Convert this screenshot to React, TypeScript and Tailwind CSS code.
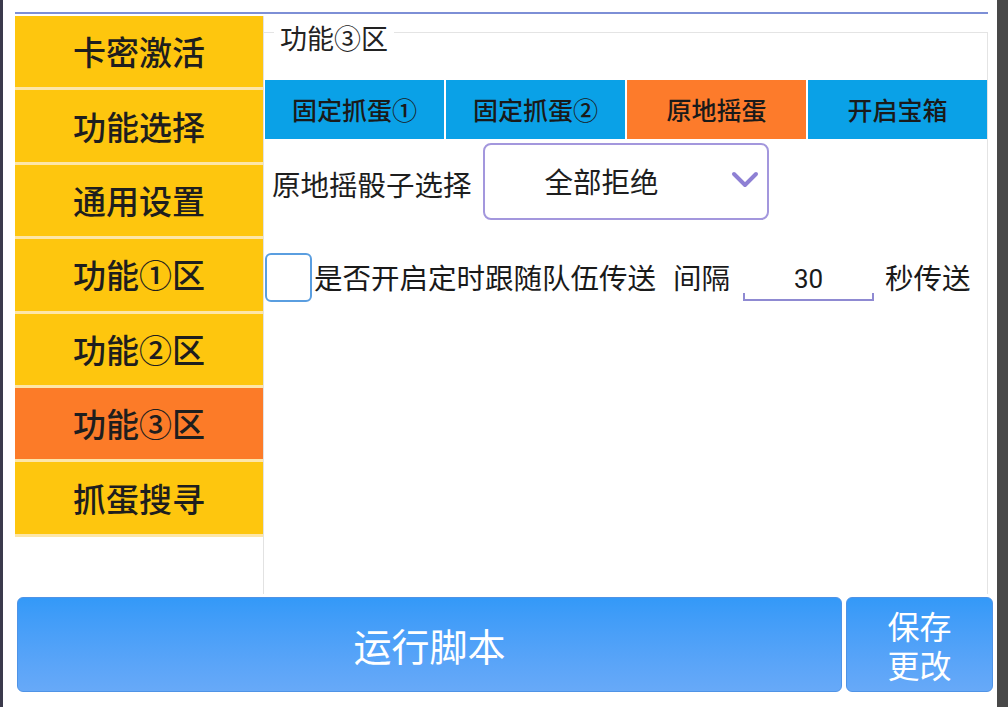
import React from "react";

const font = { fontFamily: '"Noto Sans CJK SC", "Noto Sans", sans-serif' };

const side = ["卡密激活", "功能选择", "通用设置", "功能①区", "功能②区", "功能③区", "抓蛋搜寻"];
const tabs = ["固定抓蛋①", "固定抓蛋②", "原地摇蛋", "开启宝箱"];

export default function App() {
  return (
    <div className="w-[1008px] h-[707px] flex bg-[#3a3a40] overflow-hidden" style={font}>
      <div className="w-[3px] h-full bg-[#3b3a4c]" />
      <div className="w-[994px] h-full bg-white flex flex-col pl-[12px] pr-[4px]">
        <div className="mt-[12px] h-[2px] w-[973px] bg-[#7d8fd6]" />
        <div className="mt-[2px] h-[578px] flex">
          {/* sidebar */}
          <div className="w-[249px] h-full border-r border-[#e2e2e2] flex flex-col">
            {side.map((s, i) => (
              <div
                key={s}
                className={
                  "h-[74.4px] shrink-0 border-b-[3px] border-[#fde6a8] flex items-center justify-center text-[33px] font-medium text-[#1e1e1e] leading-none " +
                  (i === 5 ? "bg-[#fc7b28]" : "bg-[#fec60e]")
                }
              >
                {s}
              </div>
            ))}
          </div>
          {/* content */}
          <div className="w-[724px] h-full flex flex-col">
            <div className="mt-[16px] flex-1 border-t border-r border-[#e4e4e4] relative flex flex-col">
              <div className="absolute left-[10px] top-[-10px] bg-white px-[6px] text-[27px] leading-[30px] text-[#222]">
                功能③区
              </div>
              <div className="mt-[47px] ml-[1px] grid grid-cols-4 gap-[2px] h-[59px]">
                {tabs.map((t, i) => (
                  <div
                    key={t}
                    className={
                      "flex items-center justify-center text-[25px] font-medium text-[#1a1a1a] leading-none " +
                      (i === 2 ? "bg-[#fd7b2b]" : "bg-[#0aa1e7]")
                    }
                  >
                    {t}
                  </div>
                ))}
              </div>
              <div className="mt-[4px] h-[77px] flex items-center pl-[8px]">
                <span className="text-[28.5px] text-[#1e1e1e] leading-none mt-[6px]">原地摇骰子选择</span>
                <div className="ml-[11px] w-[286px] h-[77px] border-2 border-[#a397dd] rounded-[8px] flex items-center pl-[60px] pr-[8px]">
                  <span className="text-[28.5px] text-[#1e1e1e] leading-none flex-1">全部拒绝</span>
                  <svg width="28" height="18" viewBox="0 0 28 18" className="mb-[4px]">
                    <polyline points="3,3 14,14 25,3" fill="none" stroke="#8e80d4" strokeWidth="4" strokeLinecap="round" strokeLinejoin="round" />
                  </svg>
                </div>
              </div>
              <div className="mt-[33px] flex items-center pl-[1px]">
                <div className="w-[47px] h-[49px] border-2 border-[#5a9ee0] rounded-[6px]" />
                <span className="ml-[2px] text-[28.5px] text-[#1a1a1a] leading-none">是否开启定时跟随队伍传送</span>
                <span className="ml-[17px] text-[28.5px] text-[#1a1a1a] leading-none">间隔</span>
                <div className="ml-[13px] w-[131px] flex flex-col items-center mt-[12px]">
                  <span className="text-[26px] text-[#1a1a1a] leading-none" style={{ fontFamily: 'Roboto, "Noto Sans", sans-serif' }}>30</span>
                  <div className="mt-[1px] w-full h-[8px] border-b-2 border-x-2 border-[#8f8ad2]" />
                </div>
                <span className="ml-[11px] text-[28.5px] text-[#1a1a1a] leading-none">秒传送</span>
              </div>
            </div>
          </div>
        </div>
        <div className="mt-[3px] h-[95px] flex gap-[4px] pl-[2px]">
          <div className="w-[825px] h-full rounded-[6px] border border-[#4f93e6] bg-gradient-to-b from-[#3399f8] to-[#67a9f8] flex items-center justify-center text-white text-[38px] leading-none">
            运行脚本
          </div>
          <div className="w-[147px] h-full rounded-[6px] border border-[#4f93e6] bg-gradient-to-b from-[#3399f8] to-[#67a9f8] flex flex-col items-center justify-center gap-[7px] text-white text-[32px] leading-none">
            <span>保存</span>
            <span>更改</span>
          </div>
        </div>
      </div>
      <div className="flex-1 h-full bg-[#484848]" />
    </div>
  );
}
